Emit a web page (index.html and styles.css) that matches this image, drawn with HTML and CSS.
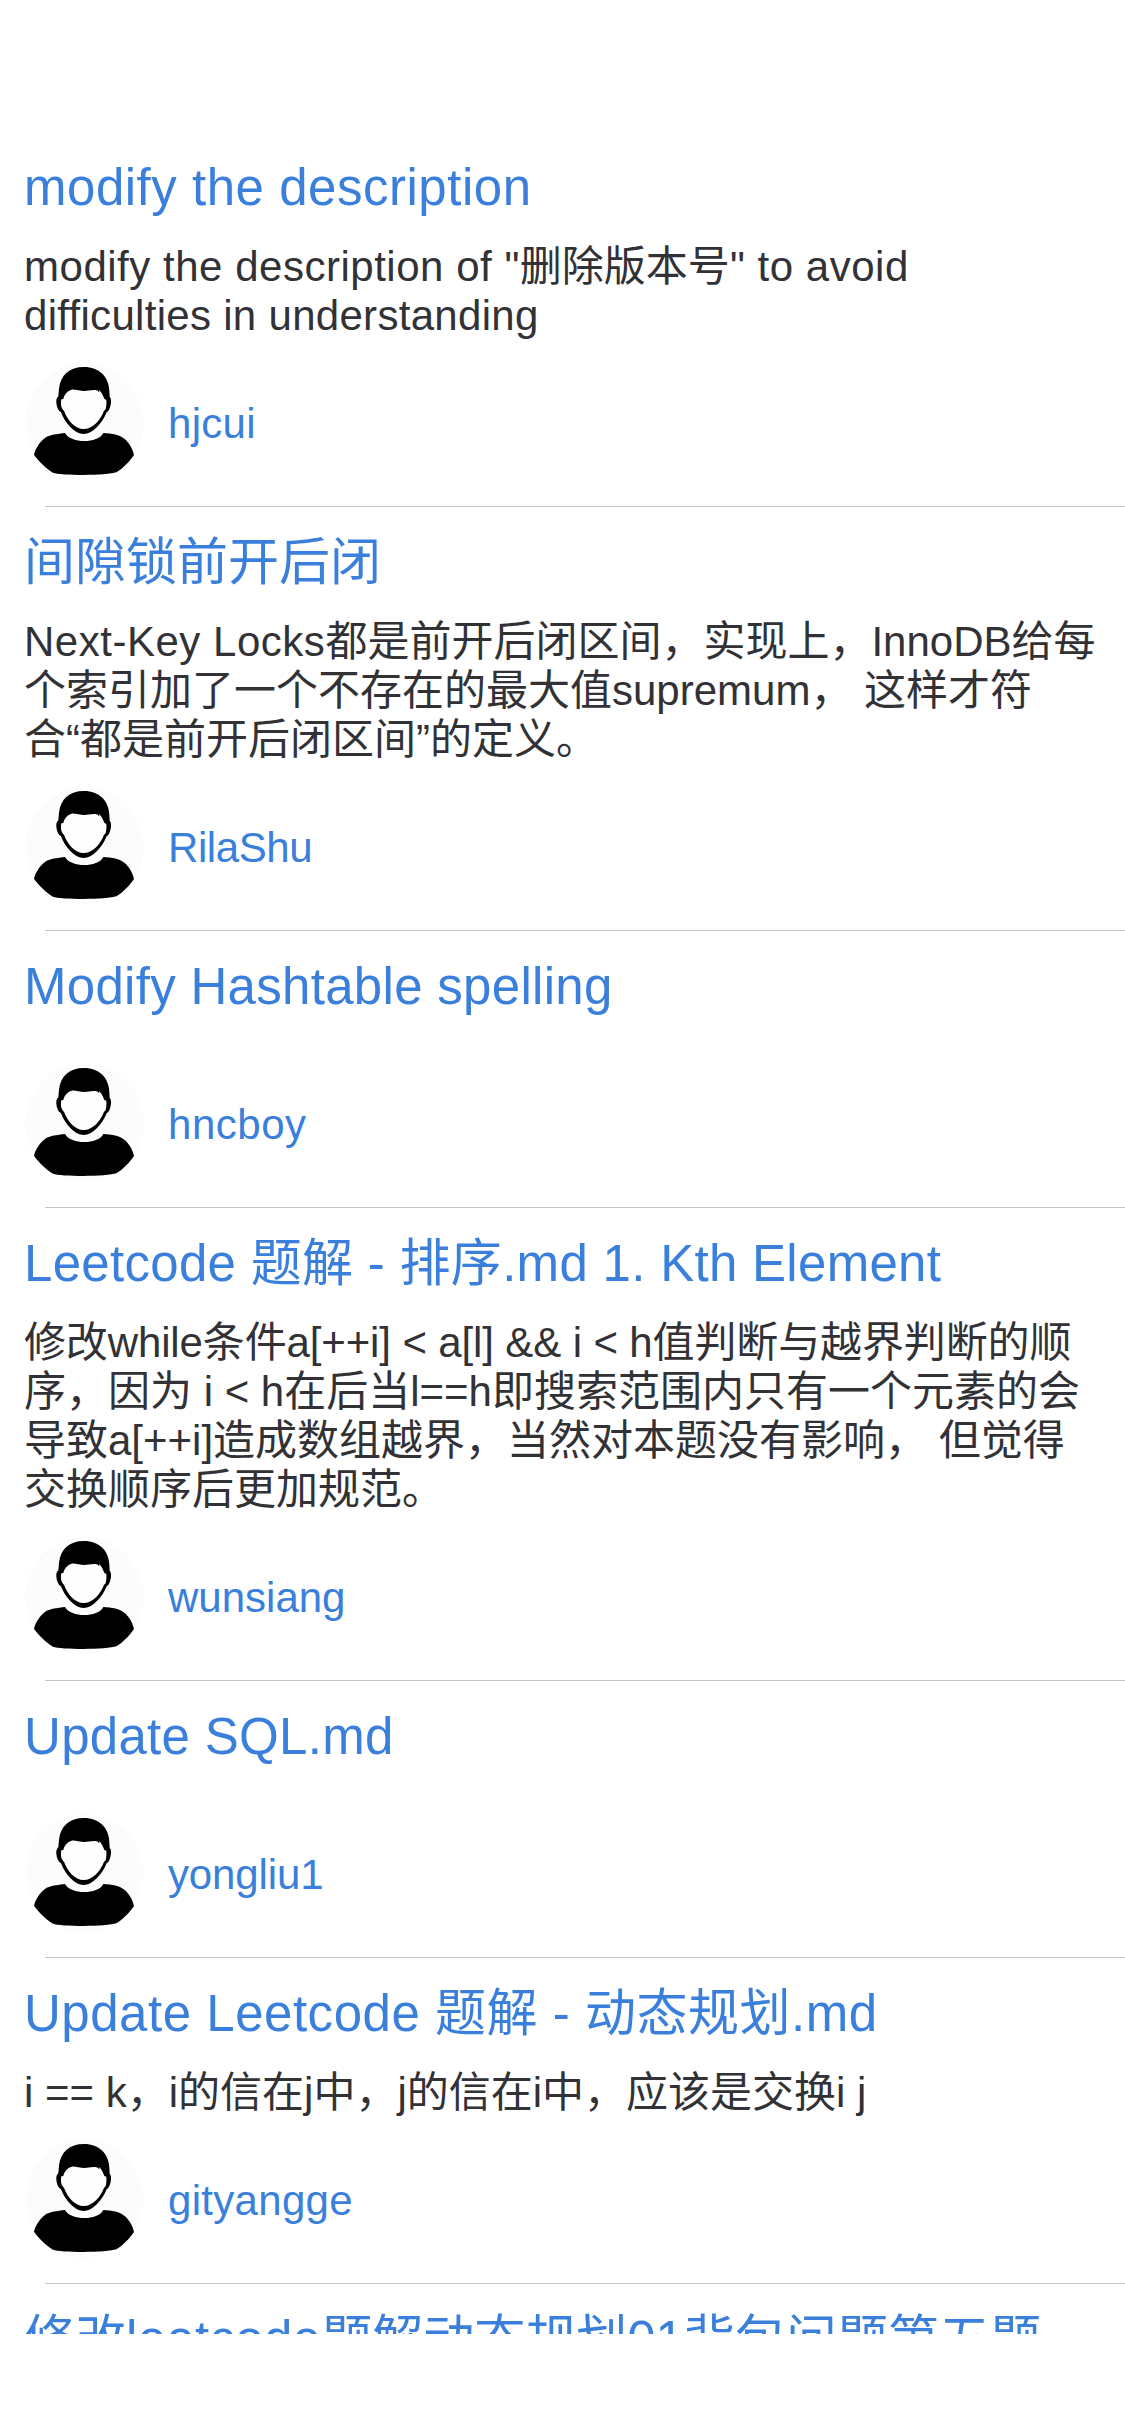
FILE: index.html
```html
<!DOCTYPE html>
<html lang="zh-CN">
<head>
<meta charset="utf-8">
<title>Pull requests</title>
<link rel="stylesheet" href="styles.css">
</head>
<body>
<svg class="defs" aria-hidden="true">
  <defs>
    <pattern id="hatch" width="12" height="12" patternUnits="userSpaceOnUse">
      <path d="M-3 3L3 -3M0 12L12 0M9 15L15 9" stroke="#f4f4f4" stroke-width="2.5"/>
    </pattern>
    <symbol id="avatar" viewBox="27 21 360 360">
      <circle cx="208" cy="201" r="177" fill="#fefefe"/>
      <circle cx="208" cy="201" r="177" fill="url(#hatch)"/>
      <path d="M150 234C160 251 183 258 208 258C233 258 256 251 265 234C290 235 315 240 328 251C343 263 354 283 357 300C345 318 323 341 304 352C278 362 138 362 114 353C93 340 68 316 57 299C61 281 75 260 90 249C102 239 128 237 150 234Z"/>
      <path d="M207 36C252 36 282 65 283 108L284 125C289 129 289 140 287 149C285 160 281 168 275 172C261 206 233 237 206 237C179 237 151 206 138 172C129 166 125 155 124 143C123 135 125 128 130 124L132 101C137 60 163 36 207 36Z"/>
      <path fill="#fefefe" d="M145 132C147 119 158 107 170 104C182 103 195 108 208 108C221 108 232 103 244 106C248 107 250 110 253 112L252 105C258 110 264 120 268 132L274 134C275 145 274 157 271 164L267 167C257 195 232 222 206 222C180 222 157 195 147 167C140 163 137 151 138 139L139 133Z"/>
    </symbol>
  </defs>
</svg>
<main class="list">
  <article class="item">
    <h2 class="title wider">modify the description</h2>
    <p class="body"><span class="wider">modify the description of "</span>删除版本号<span class="wider">" to avoid</span><br><span class="wide">difficulties in understanding</span></p>
    <div class="author"><svg class="avatar"><use href="#avatar"/></svg><span class="name wide">hjcui</span></div>
  </article>
  <article class="item">
    <h2 class="title">间隙锁前开后闭</h2>
    <p class="body"><span class="wider">Next-Key Locks</span>都是前开后闭区间，实现上，InnoDB给每<br>个索引加了一个不存在的最大值supremum， 这样才符<br>合“都是前开后闭区间”的定义。</p>
    <div class="author"><svg class="avatar"><use href="#avatar"/></svg><span class="name tight">RilaShu</span></div>
  </article>
  <article class="item">
    <h2 class="title wide">Modify Hashtable spelling</h2>
    <p class="body"></p>
    <div class="author"><svg class="avatar"><use href="#avatar"/></svg><span class="name wider">hncboy</span></div>
  </article>
  <article class="item">
    <h2 class="title wide">Leetcode 题解 - 排序.md 1. Kth Element</h2>
    <p class="body"><span class="snug">修改while条件a[++i] &lt; a[l] &amp;&amp; i &lt; h值判断与越界判断的顺</span><br>序，因为 i &lt; h在后当l==h即搜索范围内只有一个元素的会<br>导致a[++i]造成数组越界，当然对本题没有影响， 但觉得<br>交换顺序后更加规范。</p>
    <div class="author"><svg class="avatar"><use href="#avatar"/></svg><span class="name">wunsiang</span></div>
  </article>
  <article class="item">
    <h2 class="title wide">Update SQL.md</h2>
    <p class="body"></p>
    <div class="author"><svg class="avatar"><use href="#avatar"/></svg><span class="name snug">yongliu1</span></div>
  </article>
  <article class="item">
    <h2 class="title wider">Update Leetcode 题解 - 动态规划.md</h2>
    <p class="body">i == k，i的信在j中，j的信在i中，应该是交换i j</p>
    <div class="author"><svg class="avatar"><use href="#avatar"/></svg><span class="name wide">gityangge</span></div>
  </article>
  <article class="item">
    <h2 class="title">修改<span class="wide">leetcode</span>题解动态规划01背包问题第五题</h2>
  </article>
</main>
</body>
</html>
```

FILE: styles.css
```css
* { box-sizing: border-box; }

body {
  margin: 0;
  height: 2436px;
  padding: 132px 0 102px;
  overflow: hidden;
  background: #fff;
  color: #323236;
  font-family: "Liberation Sans", "Noto Sans CJK SC", sans-serif;
}

.defs {
  display: block;
  width: 0;
  height: 0;
}

.list {
  height: 2202px;
  overflow: hidden;
}

.item {
  display: flex;
  flex-direction: column;
  padding: 24px 0 0 24px;
}

/* Hairline separator, inset from the left edge */
.item::after {
  content: "";
  height: 1px;
  margin: 24px 0 0 21px;
  background: #c6c6c8;
}

.title {
  margin: 0;
  height: 60px;
  font-size: 51px;
  font-weight: 400;
  line-height: 64px;
  white-space: nowrap;
  color: #3a7fdb;
}

.body {
  margin: 26px 0 22px;
  font-size: 42px;
  line-height: 49px;
  white-space: nowrap;
}

.author {
  display: flex;
  align-items: center;
  gap: 24px;
  height: 120px;
}

.avatar {
  flex: none;
  width: 120px;
  height: 120px;
}

.name {
  padding-top: 3px;
  font-size: 42px;
  line-height: 49px;
  color: #3a7fdb;
}

/* Tracking steps */
.wider { letter-spacing: 0.52px; }
.wide { letter-spacing: 0.3px; }
.snug { letter-spacing: -0.13px; }
.tight { letter-spacing: -0.4px; }
```
